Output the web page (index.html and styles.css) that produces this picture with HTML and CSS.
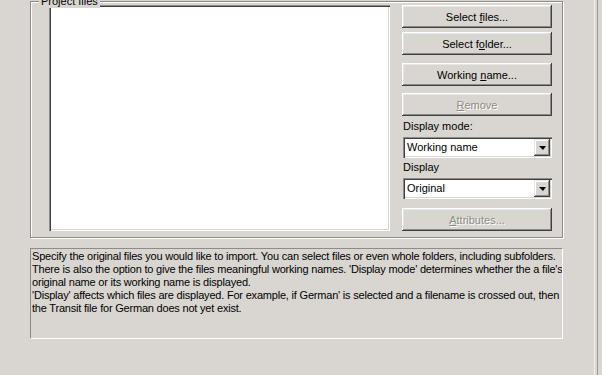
FILE: index.html
```html
<!DOCTYPE html>
<html>
<head>
<meta charset="utf-8">
<link rel="stylesheet" href="styles.css">
</head>
<body>
<div class="window">
  <div class="content">
    <div class="group">
      <span class="legend">Project files</span>
      <div class="group-body">
        <div class="list"></div>
        <div class="side">
          <button class="btn b1">Select <u>f</u>iles...</button>
          <button class="btn b2">Select f<u>o</u>lder...</button>
          <button class="btn b3">Working <u>n</u>ame...</button>
          <button class="btn b4 disabled"><u>R</u>emove</button>
          <div class="lbl l1">Display mode:</div>
          <div class="combo c1"><span class="combo-text">Working name</span><span class="drop"><span class="arrow"></span></span></div>
          <div class="lbl l2">Display</div>
          <div class="combo c2"><span class="combo-text">Original</span><span class="drop"><span class="arrow"></span></span></div>
          <button class="btn b5 disabled"><u>A</u>ttributes...</button>
        </div>
      </div>
    </div>
    <div class="desc">
      <p>Specify the original files you would like to import. You can select files or even whole folders, including subfolders.<br>There is also the option to give the files meaningful working names. 'Display mode' determines whether the a file's<br>original name or its working name is displayed.</p>
      <p>'Display' affects which files are displayed. For example, if German' is selected and a filename is crossed out, then<br>the Transit file for German does not yet exist.</p>
    </div>
  </div>
  <div class="edge"></div>
</div>
</body>
</html>
```

FILE: styles.css
```css
html, body {
  margin: 0;
  padding: 0;
}
body {
  background: #d9d6d1;
  font-family: "Liberation Sans", Arial, sans-serif;
  font-size: 11px;
  color: #000;
  width: 602px;
  height: 375px;
  overflow: hidden;
}
.window {
  display: flex;
  height: 375px;
}
.content {
  width: 594px;
  box-sizing: border-box;
  padding: 1px 0 0 30px;
}
.group {
  position: relative;
  width: 533px;
  height: 237px;
  box-sizing: border-box;
  border: 1px solid #8e8c88;
  box-shadow: 1px 1px 0 #fff, inset 1px 1px 0 #fff;
}
.legend {
  position: absolute;
  top: -7px;
  left: 8px;
  padding: 0 2px;
  background: #d9d6d1;
  line-height: 13px;
}
.group-body {
  display: flex;
  padding: 3px 0 0 18px;
}
.list {
  width: 341px;
  height: 226px;
  background: #fff;
  box-shadow: inset 1px 1px 0 #8e8c88, inset 2px 2px 0 #404040, inset -1px -1px 0 #fff, inset -2px -2px 0 #d9d6d1;
}
.side {
  margin-left: 12px;
  width: 150px;
  display: flex;
  flex-direction: column;
}
.btn {
  display: block;
  width: 150px;
  height: 23px;
  padding: 0;
  margin: 0;
  border: none;
  background: #d9d6d1;
  font-family: "Liberation Sans", Arial, sans-serif;
  font-size: 11px;
  color: #000;
  box-shadow: inset -1px -1px 0 #404040, inset 1px 1px 0 #fff, inset -2px -2px 0 #8e8c88, inset 2px 2px 0 #e8e6e2;
}
.btn.disabled {
  color: #8e8c88;
  text-shadow: 1px 1px 0 #fff;
}
.b2 { margin-top: 4px; }
.b3 { margin-top: 8px; }
.b4 { margin-top: 7px; }
.b5 { margin-top: 9px; }
.lbl {
  line-height: 13px;
  padding-left: 1px;
}
.l1 { margin-top: 4px; }
.l2 { margin-top: 3px; }
.combo {
  position: relative;
  display: flex;
  align-items: center;
  width: 149px;
  height: 21px;
  box-sizing: border-box;
  margin-left: 1px;
  background: #fff;
  box-shadow: inset 1px 1px 0 #8e8c88, inset 2px 2px 0 #404040, inset -1px -1px 0 #fff, inset -2px -2px 0 #d9d6d1;
}
.c1 { margin-top: 4px; }
.c2 { margin-top: 4px; }
.combo-text {
  flex: 1;
  padding-left: 4px;
  line-height: 13px;
}
.drop {
  width: 16px;
  height: 17px;
  margin-right: 2px;
  display: flex;
  align-items: center;
  justify-content: center;
  background: #d9d6d1;
  box-shadow: inset -1px -1px 0 #404040, inset 1px 1px 0 #e8e6e2, inset -2px -2px 0 #8e8c88, inset 2px 2px 0 #fff;
}
.arrow {
  width: 0;
  height: 0;
  border-left: 4px solid transparent;
  border-right: 3px solid transparent;
  border-top: 4px solid #000;
  margin-top: 1px;
}
.desc {
  margin-top: 10px;
  width: 533px;
  height: 91px;
  box-sizing: border-box;
  border-top: 1px solid #8e8c88;
  border-left: 1px solid #8e8c88;
  border-bottom: 1px solid #fff;
  border-right: 1px solid #fff;
  padding: 1px 0 0 1px;
  line-height: 13px;
  letter-spacing: -0.2px;
  white-space: nowrap;
  overflow: hidden;
}
.desc p {
  margin: 0;
}
.edge {
  width: 8px;
  background: linear-gradient(to right, #f2f1ee 0 1px, #d9d6d1 1px 3px, #9a9894 3px 4px, #d9d6d1 4px);
}
```
